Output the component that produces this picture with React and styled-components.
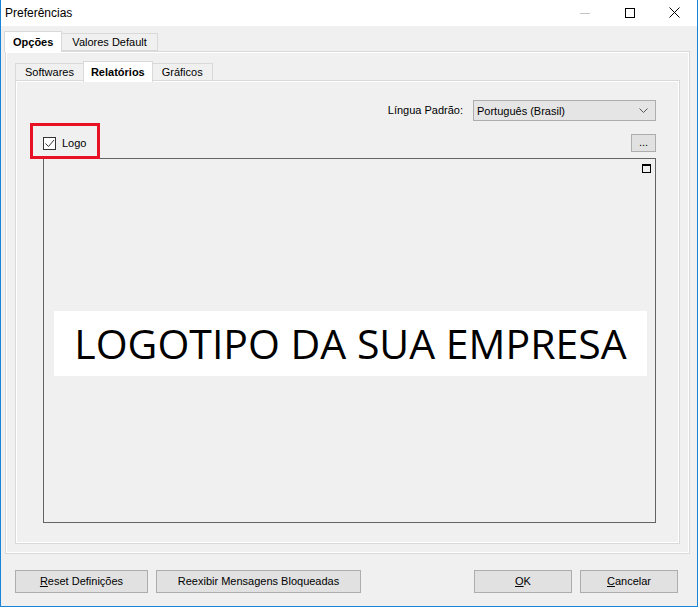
import { styled, createGlobalStyle } from "styled-components";

const GlobalStyle = createGlobalStyle`
  html, body {
    margin: 0;
    padding: 0;
    background: #ffffff;
  }
  * {
    box-sizing: border-box;
  }
`;

const colors = {
    face: "#f0f0f0",
    tabBorder: "#d9d9d9",
    button: "#e1e1e1",
    buttonBorder: "#adadad",
    text: "#000000",
    frame: "#1883d7",
};

const App = () => {
    return (
        <>
            <GlobalStyle />
            <Window>
                <TitleBar>
                    <Title>Preferências</Title>
                    <Controls>
                        <Control disabled>
                            <svg width="10" height="10" viewBox="0 0 10 10">
                                <path d="M0 5.5h10" stroke="#c4c4c4" strokeWidth="1" />
                            </svg>
                        </Control>
                        <Control>
                            <svg width="10" height="10" viewBox="0 0 10 10">
                                <rect x="0.5" y="0.5" width="9" height="9" fill="none" stroke="#000" strokeWidth="1" />
                            </svg>
                        </Control>
                        <Control>
                            <svg width="11" height="11" viewBox="0 0 11 11">
                                <path d="M0.5 0.5l10 10M10.5 0.5l-10 10" stroke="#000" strokeWidth="1" />
                            </svg>
                        </Control>
                    </Controls>
                </TitleBar>
                <Client>
                    <TabStrip>
                        <Tab active bold pad={8}>Opções</Tab>
                        <Tab pad={10}>Valores Default</Tab>
                    </TabStrip>
                    <OuterPanel>
                        <InnerTabStrip>
                            <Tab>Softwares</Tab>
                            <Tab active bold pad={7}>Relatórios</Tab>
                            <Tab pad={9}>Gráficos</Tab>
                        </InnerTabStrip>
                        <InnerPanel>
                            <LanguageRow>
                                <Label>Língua Padrão:</Label>
                                <Select>
                                    <span>Português (Brasil)</span>
                                    <svg width="9" height="5" viewBox="0 0 9 5">
                                        <path d="M0.5 0.5l4 4 4-4" fill="none" stroke="#555" strokeWidth="1" />
                                    </svg>
                                </Select>
                            </LanguageRow>
                            <LogoRow>
                                <CheckWrap>
                                    <CheckBox>
                                        <svg width="11" height="11" viewBox="0 0 11 11">
                                            <path d="M1.5 5.5l3 3 5.5-6.5" fill="none" stroke="#333" strokeWidth="1" />
                                        </svg>
                                    </CheckBox>
                                    <CheckLabel>Logo</CheckLabel>
                                    <Highlight />
                                </CheckWrap>
                                <DotsButton>...</DotsButton>
                            </LogoRow>
                            <LogoBox>
                                <SizeGrip />
                                <LogoBand>LOGOTIPO DA SUA EMPRESA</LogoBand>
                            </LogoBox>
                        </InnerPanel>
                    </OuterPanel>
                    <ButtonBar>
                        <Button width={133}><u>R</u>eset Definições</Button>
                        <Button width={205}>Reexibir Mensagens Bloqueadas</Button>
                        <Spacer />
                        <Button width={98}><u>O</u>K</Button>
                        <Button width={98}><u>C</u>ancelar</Button>
                    </ButtonBar>
                </Client>
            </Window>
        </>
    );
};

const Window = styled.div`
    width: 698px;
    height: 607px;
    display: flex;
    flex-direction: column;
    border: 1px solid ${colors.frame};
    border-top: none;
    font-family: "Liberation Sans", Arial, sans-serif;
    font-size: 11px;
    color: ${colors.text};
`;
const TitleBar = styled.div`
    height: 26px;
    background: #ffffff;
    display: flex;
    align-items: center;
    padding-left: 4px;
`;
const Title = styled.div`
    flex: 1;
    font-size: 12px;
    padding-bottom: 1px;
`;
const Controls = styled.div`
    display: flex;
    height: 100%;
`;
const Control = styled.div`
    width: 45px;
    height: 100%;
    display: flex;
    align-items: center;
    justify-content: center;
    padding-bottom: 1px;
`;
const Client = styled.div`
    flex: 1;
    background: ${colors.face};
    display: flex;
    flex-direction: column;
    padding: 5px 7px 0 3px;
`;
const TabStrip = styled.div`
    display: flex;
    align-items: flex-end;
    height: 20px;
    padding-left: 1px;
    position: relative;
    z-index: 1;
`;
const InnerTabStrip = styled(TabStrip)`
    margin: 7px 0 0 9px;
    height: 22px;
    padding-left: 0;
`;
const Tab = styled.div`
    height: ${props => props.active ? "21px" : "18px"};
    padding: 0 ${props => props.pad ?? 9}px;
    margin: 0 ${props => props.active ? "-1px" : "0"};
    display: flex;
    align-items: center;
    background: ${props => props.active ? "#ffffff" : colors.face};
    border: 1px solid ${colors.tabBorder};
    border-bottom: ${props => props.active ? "none" : `1px solid ${colors.tabBorder}`};
    font-weight: ${props => props.bold ? "bold" : "normal"};
    position: relative;
    z-index: ${props => props.active ? 2 : 1};
    margin-bottom: ${props => props.active ? "-1px" : "0"};
`;
const OuterPanel = styled.div`
    height: 503px;
    margin-left: 1px;
    border: 1px solid ${colors.tabBorder};
    box-shadow: inset 1px 1px 0 #ffffff, inset -1px -1px 0 #ffffff;
    display: flex;
    flex-direction: column;
`;
const InnerPanel = styled.div`
    height: 464px;
    margin: -1px 9px 0 9px;
    border: 1px solid ${colors.tabBorder};
    box-shadow: inset 1px 1px 0 #ffffff, inset -1px -1px 0 #ffffff;
    padding: 19px 23px 0 27px;
    display: flex;
    flex-direction: column;
`;
const LanguageRow = styled.div`
    display: flex;
    justify-content: flex-end;
    align-items: center;
    gap: 10px;
`;
const Label = styled.div`
    padding-bottom: 1px;
`;
const Select = styled.div`
    width: 183px;
    height: 21px;
    background: #e5e5e5;
    border: 1px solid ${colors.buttonBorder};
    display: flex;
    align-items: center;
    justify-content: space-between;
    padding: 0 7px 0 3px;
`;
const LogoRow = styled.div`
    display: flex;
    justify-content: space-between;
    align-items: flex-end;
    margin-top: 13px;
    height: 18px;
`;
const CheckWrap = styled.div`
    position: relative;
    display: flex;
    align-items: center;
    gap: 6px;
    height: 18px;
`;
const CheckBox = styled.div`
    width: 13px;
    height: 13px;
    border: 1px solid #333333;
    background: #ffffff;
    display: flex;
    align-items: center;
    justify-content: center;
`;
const CheckLabel = styled.div`
    padding-bottom: 1px;
`;
const Highlight = styled.div`
    position: absolute;
    left: -13px;
    top: -11px;
    width: 70px;
    height: 36px;
    border: 3px solid #e81123;
    z-index: 3;
`;
const DotsButton = styled.div`
    width: 25px;
    height: 18px;
    background: ${colors.button};
    border: 1px solid ${colors.buttonBorder};
    display: flex;
    align-items: center;
    justify-content: center;
    padding-bottom: 2px;
`;
const LogoBox = styled.div`
    position: relative;
    margin-top: 6px;
    height: 365px;
    border: 1px solid #646464;
    display: flex;
    align-items: center;
    padding: 6px 8px 0 10px;
`;
const SizeGrip = styled.div`
    position: absolute;
    top: 5px;
    right: 4px;
    width: 9px;
    height: 9px;
    border: 1px solid #000;
    border-top-width: 2px;
`;
const LogoBand = styled.div`
    flex: 1;
    height: 65px;
    background: #ffffff;
    display: flex;
    align-items: center;
    justify-content: center;
    font-family: "Open Sans", sans-serif;
    font-size: 41px;
    padding-bottom: 2px;
`;
const ButtonBar = styled.div`
    display: flex;
    gap: 8px;
    margin-top: 16px;
    padding-left: 11px;
    padding-right: 12px;
`;
const Spacer = styled.div`
    flex: 1;
`;
const Button = styled.div`
    width: ${props => props.width}px;
    height: 23px;
    background: ${colors.button};
    border: 1px solid ${colors.buttonBorder};
    display: flex;
    align-items: center;
    justify-content: center;
    padding-bottom: 1px;
`;

export default App;
